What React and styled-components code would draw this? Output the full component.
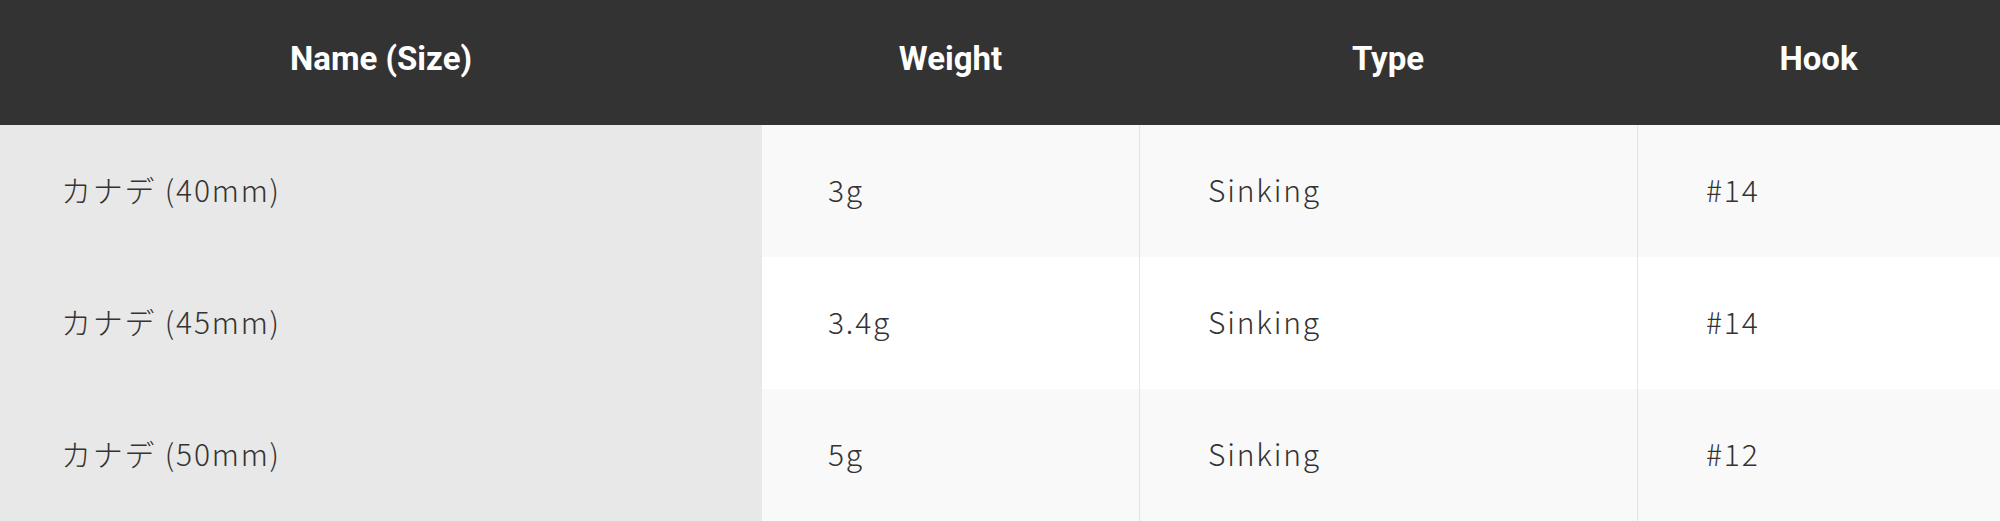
import React from 'react';
import styled, { createGlobalStyle } from 'styled-components';

const GlobalStyle = createGlobalStyle`
  body {
    margin: 0;
    background: #ffffff;
  }
`;

const Table = styled.div`
  display: grid;
  grid-template-columns: 762px 377px 498px 1fr;
  width: 2000px;
`;

const HeadCell = styled.div`
  height: 125px;
  background: #333333;
  color: #ffffff;
  font-family: Roboto, "Noto Sans", sans-serif;
  font-weight: 700;
  font-size: 33px;
  display: flex;
  align-items: center;
  justify-content: center;
  padding-bottom: 8px;
  box-sizing: border-box;
`;

const Cell = styled.div`
  height: 132px;
  box-sizing: border-box;
  display: flex;
  align-items: center;
  padding-left: ${(p) => p.$pad || 66}px;
  padding-bottom: 4px;
  font-family: "Noto Sans CJK JP", "Noto Sans", sans-serif;
  font-weight: 300;
  font-size: 30px;
  letter-spacing: 0.06em;
  color: #333333;
  background: ${(p) => (p.$first ? '#e8e8e8' : p.$odd ? '#f9f9f9' : '#ffffff')};
  border-left: ${(p) => (p.$line ? '1px solid #e4e4e4' : 'none')};
`;

const heads = ['Name (Size)', 'Weight', 'Type', 'Hook'];

const rows = [
  ['カナデ (40mm)', '3g', 'Sinking', '#14'],
  ['カナデ (45mm)', '3.4g', 'Sinking', '#14'],
  ['カナデ (50mm)', '5g', 'Sinking', '#12'],
];

export default function App() {
  return (
    <>
      <GlobalStyle />
      <Table>
        {heads.map((h) => (
          <HeadCell key={h}>{h}</HeadCell>
        ))}
        {rows.map((r, i) =>
          r.map((v, j) => (
            <Cell
              key={i + '-' + j}
              $first={j === 0}
              $odd={i % 2 === 0}
              $line={j >= 2}
              $pad={j === 0 ? 61 : j === 1 ? 66 : 68}
            >
              {v}
            </Cell>
          ))
        )}
      </Table>
    </>
  );
}
